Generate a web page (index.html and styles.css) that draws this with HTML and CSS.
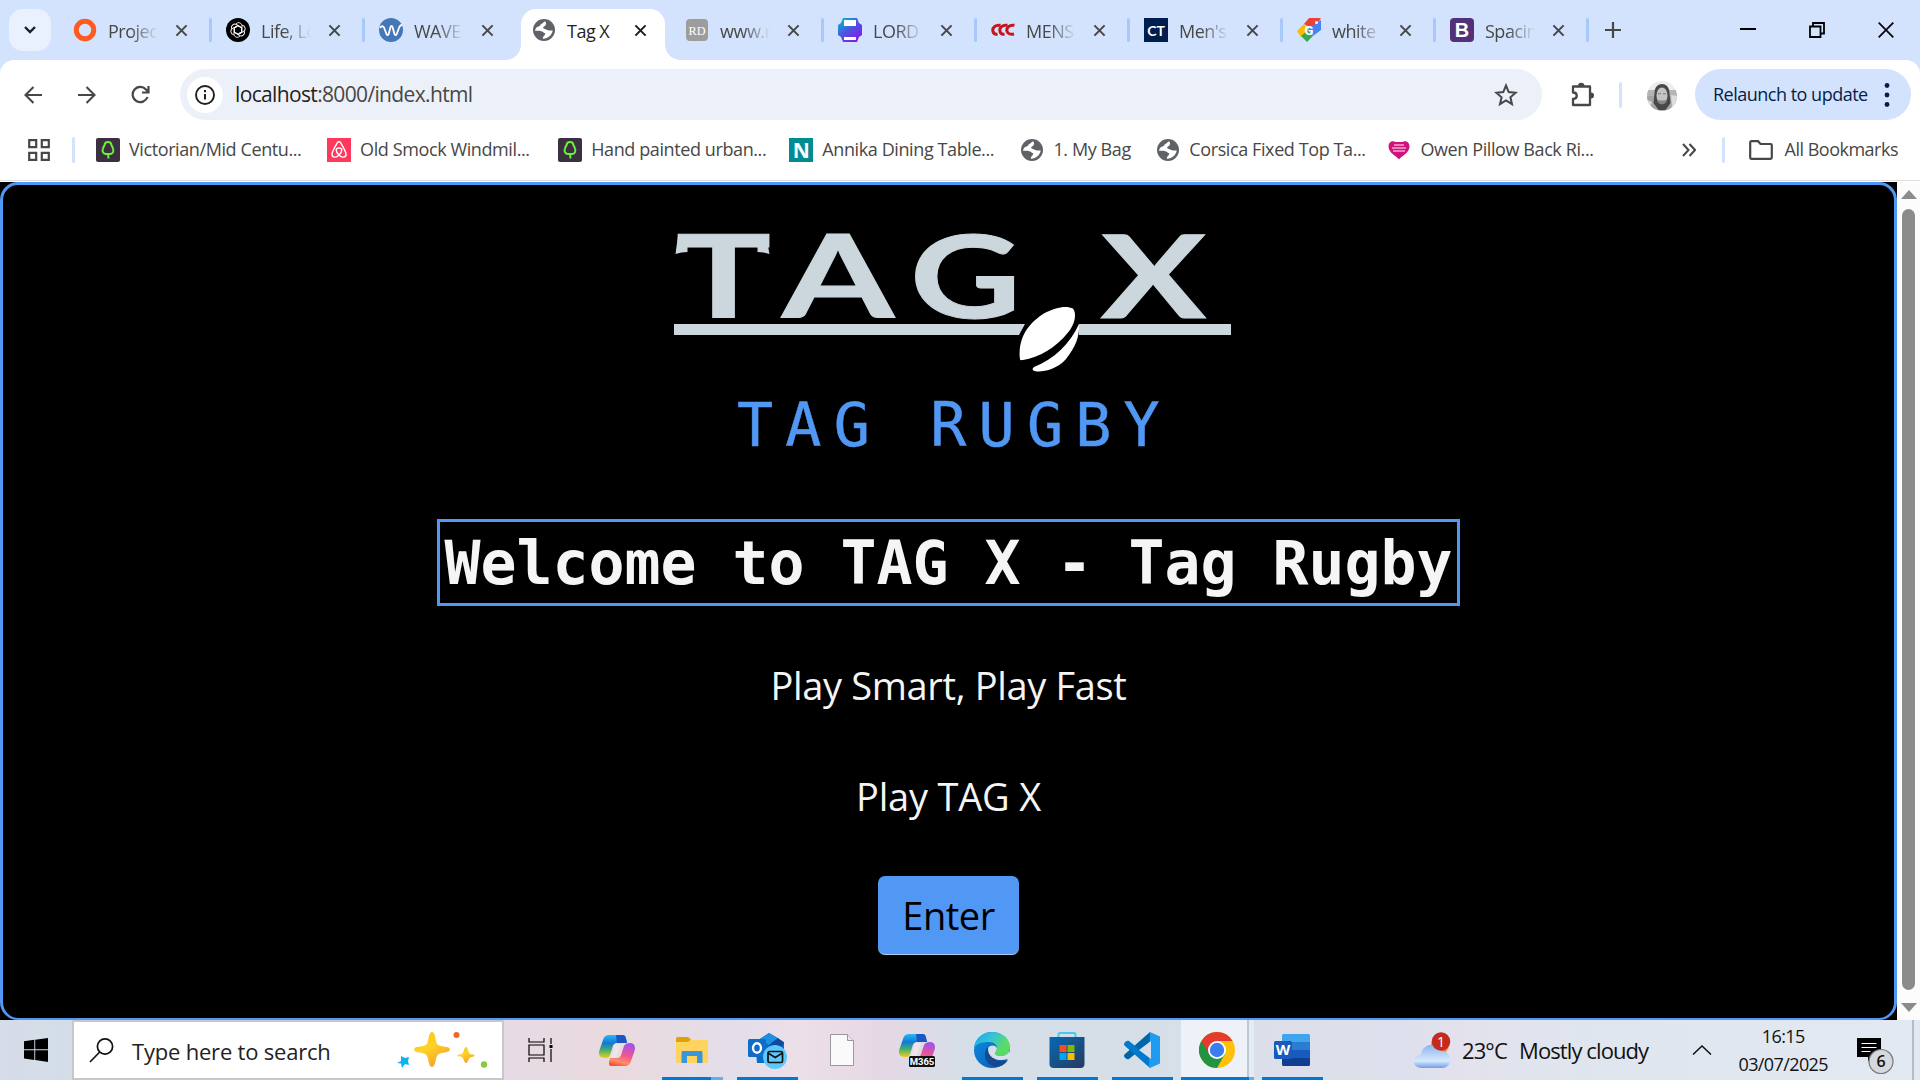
FILE: index.html
```html
<!DOCTYPE html>
<html lang="en">
<head>
<meta charset="utf-8">
<title>Tag X</title>
<link rel="stylesheet" href="styles.css">
</head>
<body>
<svg class="defs" width="0" height="0" aria-hidden="true">
  <defs>
    <symbol id="globe" viewBox="0 0 24 24"><circle cx="12" cy="12" r="11" fill="#5f6368"/><path d="M13 3.300c-2 .9-1.800 2-3.500 2.600-1.500.5-1 2-3 2.600C4.500 9.200 3.500 10 3 12.800c2.500-.3 6-.3 7.500 1 1 .9 2 1.400 3 2-.6 1.700-2.300 1.700-2.700 4.900 5 .2 9-3.400 9.900-8.200-2-.4-4 .6-5.500-.4-1.500-1-3-.7-4-2-.4-1.600 1.800-1.700 2.300-2.800s1.200-2 -.5-4z" fill="#fff"/></symbol>
    <symbol id="cross" viewBox="0 0 14 14"><path d="M1.500 1.500l11 11M12.500 1.500l-11 11" stroke="currentColor" stroke-width="2.200"/></symbol>
    <symbol id="tree" viewBox="0 0 24 24"><rect width="24" height="24" rx="2" fill="#3b3040"/><path d="M12.500 20.500l-.5-4.500H9.500C7 15.800 5.800 12.500 7 10.700 7.300 9 8 8.200 8.500 7.300 8.800 2.800 15.200 2.800 15.500 7.300c.7.900 1.300 1.700 1.500 3.400 1.200 2.300-.3 5-2.500 5.300H12" fill="none" stroke="#6cf03c" stroke-width="2"/></symbol>
    <symbol id="copilot" viewBox="0 0 36 33"><path d="M11 1h13c3 0 3 4 4 8H18c-3 0-4 2-5 6l-2 6c-1 3-3 3-6 3-4 0-6-3-4.500-8L4 6c1.200-4 3-5 7-5z" fill="url(#cpA)"/><path d="M25 32H12c-3 0-2-4-1-8h7c3 0 4-2 5-6l2-6c1-2 3-3 6-3 4 0 6 3 4.500 8L32 27c-1.200 4-3 5-7 5z" fill="url(#cpB)"/><path d="M17 1h7c3 0 3 4 4 8H18z" fill="#1b57c4"/><path d="M16 10h6l-5 14h-5z" fill="#eee5ec"/></symbol>
    <linearGradient id="cpA" x1="0" y1="0" x2="0" y2="1"><stop offset="0" stop-color="#2cb8f4"/><stop offset=".35" stop-color="#1179d6"/><stop offset=".65" stop-color="#42ae70"/><stop offset="1" stop-color="#f2cf12"/></linearGradient>
    <linearGradient id="cpB" x1=".6" y1="0" x2=".3" y2="1"><stop offset="0" stop-color="#a353e8"/><stop offset=".5" stop-color="#ef568f"/><stop offset=".8" stop-color="#ff8f66"/><stop offset="1" stop-color="#f35331"/></linearGradient>
    <linearGradient id="prt" x1="0" y1="0" x2=".8" y2="1"><stop offset="0" stop-color="#00c4cc"/><stop offset=".5" stop-color="#4a57dd"/><stop offset="1" stop-color="#8c13f0"/></linearGradient>
    <linearGradient id="star" x1="0" y1="0" x2=".6" y2="1"><stop offset="0" stop-color="#ffc107"/><stop offset=".5" stop-color="#fdd327"/><stop offset="1" stop-color="#f5a32b"/></linearGradient>
    <linearGradient id="edgeA" x1="0" y1="0" x2="1" y2=".5"><stop offset="0" stop-color="#1ba3e8"/><stop offset=".5" stop-color="#37c4d6"/><stop offset="1" stop-color="#66e04d"/></linearGradient>
    <linearGradient id="edgeB" x1="0" y1="0" x2="1" y2="1"><stop offset="0" stop-color="#0d8ee0"/><stop offset=".6" stop-color="#0a6cc8"/><stop offset="1" stop-color="#124a92"/></linearGradient>
    <linearGradient id="shop" x1="0" y1="0" x2="1" y2="1"><stop offset="0" stop-color="#0669b4"/><stop offset="1" stop-color="#283a5e"/></linearGradient>
    <linearGradient id="cloud" x1="0" y1="0" x2="0" y2="1"><stop offset="0" stop-color="#8db4ee"/><stop offset=".7" stop-color="#d7e8fc"/><stop offset="1" stop-color="#6f9de8"/></linearGradient>
  </defs>
</svg>

<header class="browser">
  <div class="tabstrip">
    <button class="tab-search"><svg width="14" height="10" viewBox="0 0 14 10"><path d="M2 2l5 5 5-5" fill="none" stroke="#1f1f1f" stroke-width="2.400"/></svg></button>
    <div class="tabs">
      <div class="tab"><svg class="fav" viewBox="0 0 24 24"><circle cx="12" cy="12" r="8.700" fill="none" stroke="#ff5a1f" stroke-width="5"/></svg><span class="tab-title">Projec</span><svg class="x"><use href="#cross"/></svg></div>
      <div class="tab"><svg class="fav" viewBox="0 0 24 24"><circle cx="12" cy="12" r="12" fill="#000"/><g fill="none" stroke="#fff" stroke-width=".9"><path id="petal" d="M10 6c2-2.700 6.300-1 6 2.200v5.600l-4 2.400-2.500-1.500"/><use href="#petal" transform="rotate(60 12 12)"/><use href="#petal" transform="rotate(120 12 12)"/><use href="#petal" transform="rotate(180 12 12)"/><use href="#petal" transform="rotate(240 12 12)"/><use href="#petal" transform="rotate(300 12 12)"/></g></svg><span class="tab-title">Life, Lo</span><svg class="x"><use href="#cross"/></svg></div>
      <div class="tab no-sep"><svg class="fav" viewBox="0 0 24 24"><circle cx="12" cy="12" r="12" fill="#4377b8"/><path d="M1 10c2-3 4-2 5 2l1.500 4c.7 1.500 1.700 1.500 2.200 0L11.500 9c.5-1.500 1.500-1.500 2 0l2 7c.5 1.500 1.500 1.500 2.200 0L20 10c1-3 2-3 3-3" fill="none" stroke="#fff" stroke-width="1.800"/></svg><span class="tab-title">WAVE</span><svg class="x"><use href="#cross"/></svg></div>
      <div class="tab active"><svg class="fav"><use href="#globe"/></svg><span class="tab-title">Tag X</span><svg class="x"><use href="#cross"/></svg></div>
      <div class="tab"><svg class="fav" viewBox="0 0 24 24"><rect x="1" y="1" width="22" height="22" rx="4" fill="#9d9d9d"/><text x="12" y="16.500" text-anchor="middle" class="rd" textLength="17" lengthAdjust="spacingAndGlyphs">RD</text></svg><span class="tab-title">www.r</span><svg class="x"><use href="#cross"/></svg></div>
      <div class="tab"><svg class="fav" viewBox="0 0 24 24"><path d="M5 0h14l2 5 3 2v10l-3 2-2 5H5l-2-5-3-2V7l3-2z" fill="url(#prt)"/><path d="M6 2h12v6H6zM6 19h12v3H6z" fill="#fff"/></svg><span class="tab-title">LORD</span><svg class="x"><use href="#cross"/></svg></div>
      <div class="tab"><svg class="fav" viewBox="0 0 24 24"><g fill="none" stroke="#c4161c" stroke-width="3"><path d="M9.500 7.300C4.500 6.500 1 9.500 2 13.500c.6 2 2.500 3 4.500 2.500"/><path d="M16.500 7.300C11.500 6.500 8 9.500 9 13.500c.6 2 2.500 3 4.500 2.500"/><path d="M23.500 7.300C18.500 6.500 15 9.500 16 13.500c.9 2.300 4 3.200 7 2.500"/></g></svg><span class="tab-title">MENS</span><svg class="x"><use href="#cross"/></svg></div>
      <div class="tab"><svg class="fav" viewBox="0 0 24 24"><rect width="24" height="24" fill="#001e4d"/><text x="12" y="17.500" text-anchor="middle" class="ct">CT</text></svg><span class="tab-title">Men's</span><svg class="x"><use href="#cross"/></svg></div>
      <div class="tab"><svg class="fav" viewBox="0 0 24 24"><path d="M12 0h12L17 12 7 6z" fill="#ea4335"/><path d="M7 6L0 13l4 6 8-7z" fill="#fbbc04"/><path d="M4 18l6 6 6-6-5-6z" fill="#34a853"/><path d="M24 2v10l-8 6-5-7z" fill="#4285f4"/><circle cx="19.500" cy="4.500" r="1.500" fill="#fff"/><text x="12" y="17" text-anchor="middle" class="gg">G</text></svg><span class="tab-title">white</span><svg class="x"><use href="#cross"/></svg></div>
      <div class="tab"><svg class="fav" viewBox="0 0 24 24"><rect width="24" height="24" rx="4" fill="#533178"/><text x="12" y="19" text-anchor="middle" class="bs">B</text></svg><span class="tab-title">Spacin</span><svg class="x"><use href="#cross"/></svg></div>
    </div>
    <svg class="newtab" width="16" height="16" viewBox="0 0 16 16"><path d="M8 0v16M0 8h16" stroke="#474747" stroke-width="2.200"/></svg>
    <div class="winbtns">
      <svg width="16" height="16" viewBox="0 0 16 16"><path d="M0 7h16" stroke="#000" stroke-width="2"/></svg>
      <svg width="16" height="16" viewBox="0 0 16 16"><path d="M1 4.500h10.500V15H1zM4 4V1h11v10.500h-3" fill="none" stroke="#000" stroke-width="1.800"/></svg>
      <svg width="16" height="16" viewBox="0 0 16 16"><path d="M.7.7l14.600 14.600M15.300.7L.7 15.300" stroke="#000" stroke-width="1.700"/></svg>
    </div>
  </div>

  <div class="toolbar">
    <nav class="navbtns">
      <svg width="18" height="18" viewBox="0 0 18 18"><path d="M18 9H2M9.500 1L1.500 9l8 8" fill="none" stroke="#474747" stroke-width="2.100"/></svg>
      <svg width="18" height="18" viewBox="0 0 18 18"><path d="M0 9h16M8.500 1l8 8-8 8" fill="none" stroke="#474747" stroke-width="2.100"/></svg>
      <svg width="20" height="20" viewBox="0 0 20 20"><path d="M16.500 12A7.600 7.600 0 1 1 15 4.500L17.500 7M17.500 1v6.500H11" fill="none" stroke="#474747" stroke-width="2.200"/></svg>
    </nav>
    <div class="omnibox">
      <span class="info"><svg width="22" height="22" viewBox="0 0 22 22"><circle cx="11" cy="11" r="9" fill="none" stroke="#1f1f1f" stroke-width="1.900"/><path d="M11 10v5.500M11 6v2.200" stroke="#1f1f1f" stroke-width="2"/></svg></span>
      <span class="url"><b>localhost</b>:8000/index.html</span>
      <svg class="bookmark-star" width="24" height="24" viewBox="0 0 24 24"><path d="M12 2.500l2.700 6.600 7 .6-5.300 4.600 1.600 6.900-6-3.700-6 3.700 1.600-6.900L2.300 9.700l7-.6z" fill="none" stroke="#474747" stroke-width="2"/></svg>
    </div>
    <svg class="ext" width="26" height="26" viewBox="0 0 26 26"><path d="M4 4.500h17v18.500H4v-6c5 0 5-6.500 0-6.500z" fill="none" stroke="#474747" stroke-width="2.300" stroke-linejoin="round"/><path d="M9 4a3.200 3.200 0 0 1 6.400 0zM22 10.500a3 3 0 0 1 0 6z" fill="#474747"/></svg>
    <i class="divider"></i>
    <svg class="avatar" width="30" height="30" viewBox="0 0 30 30"><clipPath id="av"><circle cx="15" cy="15" r="15"/></clipPath><g clip-path="url(#av)"><path d="M0 0h30v30H0z" fill="#ededed"/><path d="M0 9h30v6H0z" fill="#b5b5b5"/><path d="M0 15h30v15H0z" fill="#a5a5a5"/><path d="M0 19l5 2-2 5zM24 14l6 1v8l-5 4z" fill="#ddd"/><path d="M7.500 12c0-12 15-12 15 0l1 10-5 7h-7l-5-7z" fill="#484848"/><ellipse cx="15" cy="14.500" rx="5.500" ry="8" fill="#c4c4c4"/><path d="M10 18c1 2 9 2 10 0 0 7-10 7-10 0zM11 12h3v1.300h-3zM16 12h3v1.300h-3z" fill="#888"/></g></svg>
    <button class="relaunch"><span>Relaunch to update</span><svg width="6" height="26" viewBox="0 0 6 26"><g fill="#041e49"><circle cx="3" cy="3.500" r="2.400"/><circle cx="3" cy="13" r="2.400"/><circle cx="3" cy="22.500" r="2.400"/></g></svg></button>
  </div>

  <div class="bookmarks">
    <svg class="apps" width="22" height="22" viewBox="0 0 22 22"><path d="M1.200 1.200h7v7h-7zM13.800 1.200h7v7h-7zM1.200 13.800h7v7h-7zM13.800 13.800h7v7h-7z" fill="none" stroke="#474747" stroke-width="2.200"/></svg>
    <i class="divider"></i>
    <div class="bm"><svg class="fav"><use href="#tree"/></svg><span>Victorian/Mid Centu...</span></div>
    <div class="bm"><svg class="fav" viewBox="0 0 24 24"><path d="M0 0h24v24H0z" fill="#ff385c"/><path d="M12 17c-4-4-3.500-7 0-7s4 3 0 7zm0 0c-3 3.500-7.500 2.500-7-1.500C5.500 13 9 7 10.300 4.800c.8-1.400 2.600-1.400 3.400 0C15 7 18.500 13 19 15.500c.5 4-4 5-7 1.500z" fill="none" stroke="#fff" stroke-width="1.400"/></svg><span>Old Smock Windmil...</span></div>
    <div class="bm"><svg class="fav"><use href="#tree"/></svg><span>Hand painted urban...</span></div>
    <div class="bm"><svg class="fav" viewBox="0 0 24 24"><path d="M0 0h24v24H0z" fill="#008c95"/><text x="12" y="19.500" text-anchor="middle" class="nn">N</text></svg><span>Annika Dining Table...</span></div>
    <div class="bm short"><svg class="fav"><use href="#globe"/></svg><span>1. My Bag</span></div>
    <div class="bm"><svg class="fav"><use href="#globe"/></svg><span>Corsica Fixed Top Ta...</span></div>
    <div class="bm"><svg class="fav" viewBox="0 0 24 24"><path d="M12 21.500C10 18.500 1.500 15 1.500 8.500 1.500 3.500 6 2 8.500 4h7c2.500-2 7-.5 7 4.500 0 6.500-8.500 10-10.500 13z" fill="#d0127f"/><path d="M7 7h10M5 10h14M6 13h12" stroke="#f3a6d2" stroke-width="1.300"/></svg><span>Owen Pillow Back Ri...</span></div>
    <svg class="more" width="14" height="14" viewBox="0 0 14 14"><path d="M1 1l5.500 6L1 13M7.500 1L13 7l-5.500 6" fill="none" stroke="#474747" stroke-width="2"/></svg>
    <i class="divider"></i>
    <div class="all"><svg width="24" height="20" viewBox="0 0 24 20"><path d="M1.200 2.500c0-.8.500-1.300 1.300-1.300H9L11.500 4h10c.8 0 1.300.5 1.300 1.300v12.200c0 .8-.5 1.300-1.300 1.300h-19c-.8 0-1.300-.5-1.300-1.300z" fill="none" stroke="#474747" stroke-width="2.200"/></svg><span>All Bookmarks</span></div>
  </div>
</header>

<div class="viewport">
  <main class="page">
    <svg class="logo" width="600" height="240" viewBox="649 222 600 240" role="img">
      <g class="logo-top">
        <text x="676" y="318" textLength="95" lengthAdjust="spacingAndGlyphs">T</text>
        <text x="782" y="318" textLength="112" lengthAdjust="spacingAndGlyphs">A</text>
        <text x="910" y="318" textLength="111" lengthAdjust="spacingAndGlyphs">G</text>
        <text x="1101" y="318" textLength="105" lengthAdjust="spacingAndGlyphs">X</text>
      </g>
      <path d="M678 235.500l-2.500 18.500q6-2 12-2v-16.500zM766 235.500l3.500 18.500q-6-2-12-2v-16.500z" fill="#cbd6dd"/>
      <path d="M674 324h557v11H674z" fill="#cbd6dd"/>
      <path d="M1025 324l-6 11h60V324z" fill="#000"/>
      <path d="M1079 324v11h3v-11z" fill="#cbd6dd"/>
      <g transform="translate(0 1)">
        <path d="M1020 358.500C1018 340 1025 325 1043 313c13-7.500 24-8.500 30-5.500 4 5 2 16-5 24-12 15-29 25-45 27.500-2 0-2.500.5-3-.5z" fill="#fff"/>
        <path d="M1079 323c1 12-4 24-13 35-5 6-15 12-27 12.500-6 0-8-2-5-4.500 20-8 36-23 45-43z" fill="#fff"/>
      </g>
      <text x="737" y="446" class="logo-sub">TAG RUGBY</text>
    </svg>
    <h1 class="title">Welcome to TAG X - Tag Rugby</h1>
    <p class="lead">Play Smart, Play Fast</p>
    <p class="lead play">Play TAG X</p>
    <a class="enter">Enter</a>
  </main>
  <div class="scrollbar">
    <svg width="16" height="9" viewBox="0 0 16 9"><path d="M8 0l8 9H0z" fill="#8b8b8b"/></svg>
    <i class="thumb"></i>
    <svg width="16" height="9" viewBox="0 0 16 9"><path d="M8 9L0 0h16z" fill="#8b8b8b"/></svg>
  </div>
</div>

<footer class="taskbar">
  <div class="start"><svg width="24" height="24" viewBox="0 0 24 24"><path d="M0 3.200L10.300 1.800v9.500H0zM11.200 1.700L24 0v11.300H11.200zM0 12.200h10.300v9.700L0 20.500zM11.200 12.200H24V24l-12.800-1.900z"/></svg></div>
  <div class="search">
    <svg width="25" height="25" viewBox="0 0 25 25"><circle cx="16" cy="8.500" r="7.600" fill="none" stroke="#111" stroke-width="1.700"/><path d="M10.700 14L1 24" stroke="#111" stroke-width="1.700"/></svg>
    <span>Type here to search</span>
    <svg class="sparkles" width="92" height="38" viewBox="0 0 92 38"><path d="M36 0c4 0 3 11 6 13s12 1 12 4.500-9 2.500-12 5-2 12.500-6 12.500-3-10-6-12.500-12-1.500-12-5 9-2.500 12-4.500S32 0 36 0z" fill="url(#star)"/><path d="M70 15c2 0 2 5 3.500 6.500s5 .5 5 2-3.500 1-5 2.500S72 31 70 31s-2-4-3.500-5.500-5-.5-5-2 3.500-.5 5-2S68 15 70 15z" fill="url(#star)"/><path d="M5 24l4 2 4-1-1 4 1 4-4-1-3 4-1-4.500L1 31l4-2z" fill="#0cb2f2"/><circle cx="60.500" cy="3" r="3" fill="#f4652a"/><circle cx="88" cy="32.500" r="3.200" fill="#8cc83f"/></svg>
  </div>
  <div class="apps-row">
    <div class="app"><svg class="taskview" width="26" height="24" viewBox="0 0 26 24"><path d="M1 0v4h15V0M1 24v-4h15v4M1 7h15v10H1zM23 0v6M23 11v13" fill="none" stroke="#000" stroke-width="1.200"/><path d="M21.500 7h3v3h-3z"/></svg></div>
    <div class="app"><svg width="36" height="33"><use href="#copilot"/></svg></div>
    <div class="app run multi"><svg width="32" height="27" viewBox="0 0 32 27"><path d="M0 2C0 1 .5 0 2 0h10l4 3h14c1.500 0 2 .8 2 2v19c0 1.500-1 2-2 2H2c-1.500 0-2-.8-2-2z" fill="#ffd45e"/><path d="M0 2C0 1 .5 0 2 0h10l3 2.500-3 2.500H0z" fill="#e0a106"/><path d="M5.500 16c0-1.500.5-2 2-2h17c1.500 0 2 .5 2 2v10h-5.500v-7H11v7H5.500z" fill="#3b95dd"/></svg></div>
    <div class="app run"><svg class="outlook" width="40" height="36" viewBox="0 0 40 36"><path d="M7 9L21 0l15 9v19c0 1-1 2-2 2H9z" fill="#0a6cc4"/><path d="M12 6l9-6 9 5-9 7z" fill="#1f8fdf"/><path d="M21 12l9-7 6 5-8 10z" fill="#0f4a9e"/><rect y="6" width="18" height="18" rx="1.500" fill="#0f6cc9"/><ellipse cx="9" cy="15" rx="4" ry="4.700" fill="none" stroke="#fff" stroke-width="2.400"/><circle cx="27" cy="24" r="12" fill="#5cc9fa"/><rect x="20" y="18.500" width="14.500" height="11" rx="1.500" fill="none" stroke="#111" stroke-width="1.700"/><path d="M20 20l7.200 4.500 7.300-4.500" fill="none" stroke="#111" stroke-width="1.500"/></svg></div>
    <div class="app"><svg width="24" height="32" viewBox="0 0 24 32"><path d="M.5.500H17.500L23.500 6.500v25H.5z" fill="#fafafa" stroke="#999"/><path d="M17.500.5v6h6" fill="#e8e8e8" stroke="#999"/></svg></div>
    <div class="app"><svg width="36" height="34" viewBox="0 0 36 34"><use href="#copilot" width="36" height="33"/><rect x="10" y="23" width="26" height="11" rx="1.500" fill="#111"/><text x="23" y="31.800" text-anchor="middle" class="m365">M365</text></svg></div>
    <div class="app run"><svg width="36" height="36" viewBox="0 0 36 36"><circle cx="18" cy="18" r="18" fill="url(#edgeB)"/><path d="M0 16C1 6 9 0 18 0c11 0 18 7 18 15 0 6-4 9-9 9-4 0-6-1-6-3 0-1 2-2 2-5 0-3-3-6-8-6-7 0-13 2-15 6z" fill="url(#edgeA)"/><path d="M14 15c-6 6-3 19 9 20 6-1 9-4 11-7-7 3-19 1-20-13z" fill="#14488f"/><path d="M14 17c0-4 7-5 9-1 0 3-2 4-2 5 0 2 2 3 6 3 3 0 7-2 8.500-5L37 26l-3.500 1C26 30 14 27 14 17z" fill="#d7dfe9"/><path d="M21 21c0 2 3 3 6 3 5 0 9-4 9-9l-6-2z" fill="#57db66"/></svg></div>
    <div class="app run"><svg width="36" height="36" viewBox="0 0 36 36"><path d="M9.500 8V2.500C9.500 1.500 10 1 11 1h14c1 0 1.500.5 1.500 1.500V8" fill="none" stroke="#45c8f5" stroke-width="2"/><path d="M.5 5H35.500v27c0 2.500-1.500 4-4 4h-27c-2.500 0-4-1.500-4-4z" fill="url(#shop)"/><path d="M10.500 13h7v7h-7z" fill="#f25022"/><path d="M18.500 13h7v7h-7z" fill="#7fba00"/><path d="M10.500 21h7v7h-7z" fill="#00a4ef"/><path d="M18.500 21h7v7h-7z" fill="#ffb900"/></svg></div>
    <div class="app run"><svg width="36" height="36" viewBox="0 0 36 36"><path d="M26 0v10L5 27c-2 1-5-1.500-5-3 0-1 .5-1.500 1-2z" fill="#0065a9"/><path d="M26 36V26L5 9C3 8 0 10.500 0 12c0 1 .5 1.500 1 2z" fill="#007acc"/><path d="M26 0l10 4.500v27L26 36l-1-1z" fill="#1f9cf0"/><path d="M27 9v18L15 18z" fill="#d6dfe9"/></svg></div>
    <div class="app run current"><svg width="36" height="36" viewBox="0 0 36 36"><circle cx="18" cy="18" r="18" fill="#ffc107"/><path d="M18 18L2.400 9A18 18 0 0 0 18 36l8-14z" fill="#229342"/><path d="M18 18v-9h15.600A18 18 0 0 0 2.400 9l8 13.500z" fill="#e33b2e"/><circle cx="18" cy="18" r="9" fill="#fff"/><circle cx="18" cy="18" r="7.200" fill="#3b7ded"/></svg></div>
    <div class="app run"><svg width="36" height="33" viewBox="0 0 36 33"><path d="M8 1.500C8 .5 9 0 10 0h24c1 0 2 .5 2 1.500V9H8z" fill="#41a5ee"/><path d="M8 8h28v8.500H8z" fill="#2b7cd3"/><path d="M8 16h28v8.500H8z" fill="#185abd"/><path d="M8 24h28v6.500c0 1-1 1.500-2 1.500H10c-1 0-2-.5-2-1.500z" fill="#103f91"/><rect y="7" width="18" height="18" rx="1.500" fill="#185abd"/><text x="9" y="20.500" text-anchor="middle" class="ww">W</text></svg></div>
  </div>
  <div class="weather">
    <svg width="37" height="36" viewBox="0 0 37 36"><circle cx="26" cy="13" r="9" fill="#f6882b"/><path d="M8 36c-11 0-10-13-1-13 1-13 18-13 20-4 12 0 12 17 1 17z" fill="url(#cloud)"/><circle cx="27" cy="9.500" r="9.300" fill="#c42b1c"/><text x="27" y="14.500" text-anchor="middle" class="one">1</text></svg>
    <span class="temp">23°C</span><span class="sky">Mostly cloudy</span>
  </div>
  <svg class="chev" width="20" height="10" viewBox="0 0 20 10"><path d="M1 9.500L10 1l9 8.500" fill="none" stroke="#111" stroke-width="1.500"/></svg>
  <div class="clock"><span>16:15</span><span class="date">03/07/2025</span></div>
  <svg class="notif" width="37" height="38" viewBox="0 0 37 38"><path d="M0 0h24v19H15l-4 4.500V19H0z"/><path d="M4.500 5.500h15M4.500 9.500h15M4.500 13.500h9" stroke="#fff" stroke-width="1"/><circle cx="24" cy="23.500" r="12" fill="#d5d8dc" stroke="#777" stroke-width="1.200"/><text x="24" y="29.300" text-anchor="middle" class="six">6</text></svg>
  <i class="peek"></i>
</footer>
</body>
</html>
```
FILE: styles.css
```css
* { box-sizing: border-box; }

body {
  margin: 0;
  width: 1920px;
  height: 1080px;
  overflow: hidden;
  display: flex;
  flex-direction: column;
  font-family: "Open Sans", "Noto Sans", sans-serif;
  font-size: 18px;
  color: #474747;
}

svg { display: block; flex: none; }
.defs { position: absolute; }
button { border: 0; padding: 0; font: inherit; }
.fav { width: 24px; height: 24px; }

.browser {
  flex: none;
  height: 182px;
  background: #d3e3fd;
}

/* Tab strip */
.tabstrip { display: flex; align-items: flex-start; height: 60px; }
.tab-search {
  display: grid;
  place-items: center;
  width: 42px;
  height: 42px;
  margin: 9px 7px 0 9px;
  border-radius: 14px;
  background: #e9f0fe;
}
.tabs { display: flex; }
.tab {
  position: relative;
  display: flex;
  align-items: center;
  width: 153px;
  height: 60px;
  padding: 0 0 0 15px;
}
.tab::after {
  content: "";
  position: absolute;
  right: -1px;
  top: 18px;
  width: 3px;
  height: 24px;
  border-radius: 2px;
  background: #a8c7fa;
}
.tab.no-sep::after { display: none; }
.tab-title {
  width: 50px;
  margin: 2px 17px 0 11px;
  white-space: nowrap;
  letter-spacing: -.5px;
  mask-image: linear-gradient(90deg, #000 45%, transparent);
}
.x { width: 13px; height: 13px; color: #474747; }
.active { z-index: 1; }
.active .tab-title { color: #1f1f1f; mask-image: none; }
.active .x { color: #1f1f1f; }
.active .fav, .active .tab-title, .active .x { position: relative; z-index: 1; }
.active::before {
  content: "";
  position: absolute;
  left: 4px;
  top: 9px;
  width: 144px;
  height: 51px;
  border-radius: 15px 15px 0 0;
  background: #fff;
}
.active::after {
  left: -11px;
  right: auto;
  top: 45px;
  width: 174px;
  height: 15px;
  border-radius: 0;
  background:
    radial-gradient(circle at 0 0, transparent 14.500px, #fff 15px) left / 15px 15px no-repeat,
    radial-gradient(circle at 100% 0, transparent 14.500px, #fff 15px) right / 15px 15px no-repeat;
}
.newtab { margin: 22px 0 0 17px; }
.winbtns { display: flex; gap: 53px; margin: 22px 26px 0 auto; }

/* Toolbar */
.toolbar {
  display: flex;
  align-items: center;
  height: 68px;
  padding: 1px 9px 0 24px;
  border-radius: 14px 14px 0 0;
  background: #fff;
}
.navbtns { display: flex; align-items: center; gap: 36px; width: 156px; }
.navbtns svg:last-child { margin-left: -1px; }
.omnibox {
  display: flex;
  align-items: center;
  width: 1362px;
  height: 51px;
  padding: 0 24px 0 7px;
  border-radius: 26px;
  background: #ecf0f9;
}
.info {
  display: grid;
  place-items: center;
  width: 36px;
  height: 36px;
  border-radius: 50%;
  background: #fff;
}
.url { margin: -2px 0 0 12px; font-size: 21px; letter-spacing: -.650px; white-space: nowrap; }
.url b { font-weight: 400; color: #1f1f1f; }
.bookmark-star { margin-left: auto; }
.ext { margin: 0 24px 0 27px; }
.divider { width: 3px; height: 26px; border-radius: 2px; background: #d3e3fd; flex: none; }
.avatar { margin: 2px 18px 0 25px; }
.relaunch {
  display: flex;
  align-items: center;
  justify-content: space-between;
  width: 216px;
  height: 51px;
  padding: 0 21px 0 18px;
  border-radius: 26px;
  background: #d3e3fd;
  color: #041e49;
  letter-spacing: -.5px;
  white-space: nowrap;
}
.relaunch span { margin-top: -1px; }

/* Bookmarks bar */
.bookmarks {
  display: flex;
  align-items: center;
  height: 54px;
  padding: 0 22px 10px 28px;
  background: #fff;
  box-shadow: inset 0 -1px #fff, inset 0 -2px #dedede;
  letter-spacing: -.4px;
  white-space: nowrap;
}
.apps { margin-right: 22px; }
.bm { display: flex; align-items: center; gap: 9px; width: 231.300px; }
.bm span, .all span { margin-top: -2px; }
.apps + .divider { margin-right: 21px; }
.bm.short { width: 136px; }
.more { margin: 0 26px 0 63px; }
.all { display: flex; align-items: center; gap: 12px; margin-left: 24px; letter-spacing: -.5px; }

/* Page */
.viewport { display: flex; height: 838px; background: #000; }
.page {
  display: flex;
  flex-direction: column;
  align-items: center;
  width: 1897px;
  height: 838px;
  padding-top: 37px;
  border: 3px solid #5098f4;
  border-bottom-width: 2px;
  border-radius: 18px;
  color: #f5f5f5;
}
.logo-top {
  font: 700 115px "Lato", sans-serif;
  fill: #cbd6dd;
  stroke: #cbd6dd;
  stroke-width: 1px;
}
.logo-sub {
  font: 60px "DejaVu Sans Mono", monospace;
  letter-spacing: 12.200px;
  fill: #5098f4;
  stroke: #5098f4;
  stroke-width: .5px;
}
.title {
  display: flex;
  align-items: center;
  justify-content: center;
  width: 1023px;
  height: 87px;
  margin: 57px 0 51px;
  padding-top: 2px;
  border: 3px solid #5098f4;
  font: 700 59.800px/1 "DejaVu Sans Mono", monospace;
  white-space: nowrap;
}
.lead {
  height: 57px;
  margin: 0 0 54px;
  font-size: 38px;
  line-height: 57px;
  letter-spacing: -.350px;
}
.play { margin-bottom: 51px; letter-spacing: -.200px; }
.enter {
  display: grid;
  place-items: center;
  width: 141px;
  height: 79px;
  padding-bottom: 1px;
  border-radius: 7px;
  border-bottom: 1px solid #a9cbf5;
  background: #5098f4;
  color: #000;
  font-size: 38px;
  letter-spacing: -.500px;
}
.scrollbar {
  display: flex;
  flex-direction: column;
  align-items: center;
  justify-content: space-between;
  width: 23px;
  padding: 8px 0;
  background: #fcfcfc;
}
.thumb { width: 13px; height: 781px; border-radius: 7px; background: #8b8b8b; margin-bottom: 4px; }

/* Taskbar */
.taskbar {
  display: flex;
  align-items: flex-start;
  height: 60px;
  color: #111;
  background: linear-gradient(90deg, #d6dce8 0, #d3dee8 72px, #e7dae5 504px, #e9dade 620px, #e3deea 740px, #eddfe8 800px, #e5d8e5 885px, #d6dfe8 960px, #d6dfe8 1150px, #dcdfe9 1270px, #dee1ed 1420px, #e3e2ed 1470px, #dfe6f0 1600px, #e2e9f2 100%);
}
.start { width: 72px; padding: 18px 0 0 24px; }
.search {
  display: flex;
  align-items: flex-start;
  width: 432px;
  height: 60px;
  padding: 16px 14px 0 15px;
  border: 2px solid #c8c8c8;
  background: #fff;
  font-size: 22px;
  color: #222;
}
.search span { margin: -2px auto 0 18px; line-height: 30px; letter-spacing: -.2px; white-space: nowrap; }
.sparkles { margin-top: -6px; }
.apps-row { display: flex; }
.app {
  position: relative;
  display: grid;
  place-items: center;
  width: 75px;
  height: 60px;
}
.taskview { margin-right: 2px; }
.outlook { margin: 2px 0 0 2px; }
.run::after {
  content: "";
  position: absolute;
  left: 8px;
  bottom: 0;
  width: 61px;
  height: 3px;
  background: #0078d7;
}
.multi::after { background: linear-gradient(90deg, #0078d7 49px, #66aee7 49px); }
.current {
  background: linear-gradient(90deg, transparent 2px, #eef2f8 2px 68px, #bdc8d6 68px 70px, #e5ebf3 70px);
}
.current::after { left: 2px; width: 73px; background: linear-gradient(90deg, #0078d7 68px, #66aee7 68px); }
.weather { display: flex; margin-left: 85px; padding-top: 12px; font-size: 22px; line-height: 54px; white-space: nowrap; }
.weather span { margin-top: -9px; letter-spacing: -.900px; }
.temp { width: 57px; margin-left: 11px; }
.chev { margin: 25px 0 0 44px; }
.clock { display: flex; flex-direction: column; align-items: center; width: 94px; margin-left: 24px; letter-spacing: -.6px; }
.clock span { height: 28px; line-height: 32px; }
.notif { margin: 18px 0 0 27px; }
.peek { width: 2px; height: 60px; margin-left: auto; margin-right: 6px; background: #b5bcc6; }

/* Lettering inside icons */
.rd { font: 12px "Liberation Serif", serif; fill: #fff; }
.ct { font: 700 14px "Lato", sans-serif; fill: #fff; }
.gg { font: 700 13px "Roboto", sans-serif; fill: #fff; }
.bs { font: 700 20px "Liberation Sans", sans-serif; fill: #fff; }
.nn { font: 700 21px "Open Sans", sans-serif; fill: #fff; }
.m365 { font: 700 9.500px "Roboto", sans-serif; fill: #fff; }
.ww { font: 700 15px "Open Sans", sans-serif; fill: #fff; }
.one { font: 14px "Open Sans", sans-serif; fill: #fff; }
.six { font: 600 16px "Open Sans", sans-serif; fill: #111; }
```
